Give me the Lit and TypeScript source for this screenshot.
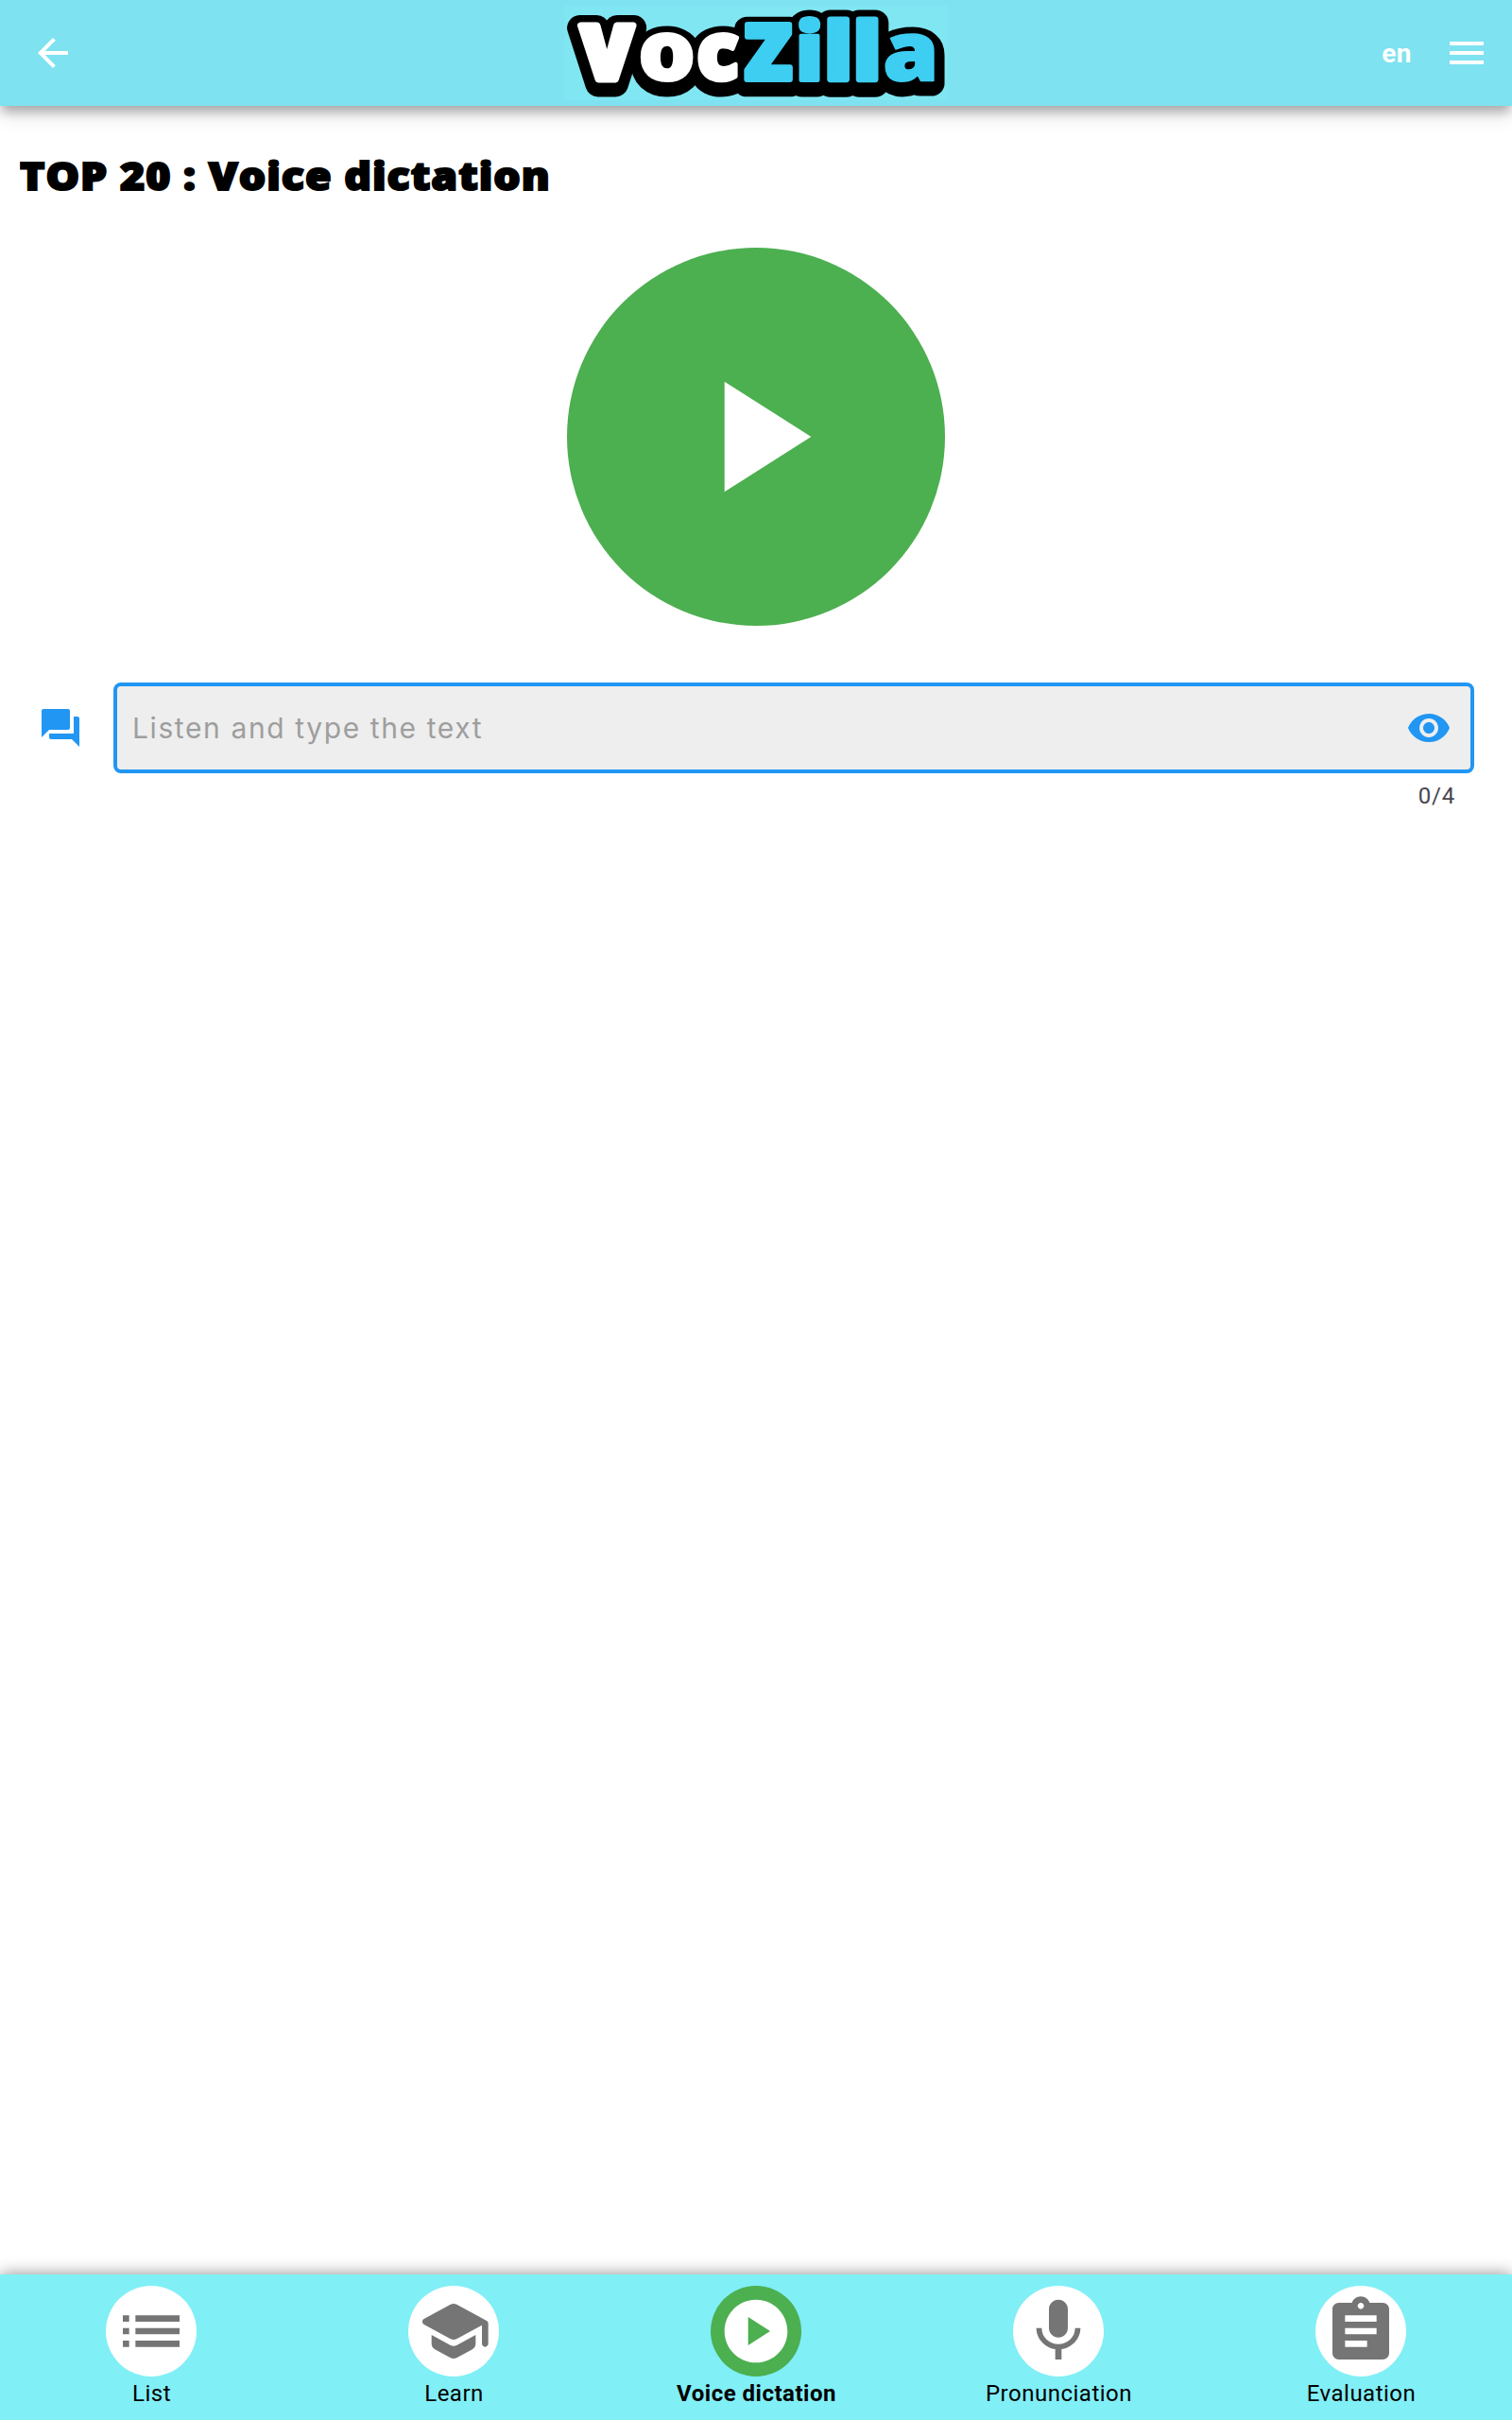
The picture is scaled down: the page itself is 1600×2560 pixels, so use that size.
import { LitElement, html, css, svg } from "lit";
import { customElement, property } from "lit/decorators.js";

const ICONS: Record<string, string> = {
  back: "M20 11H7.83l5.59-5.59L12 4l-8 8 8 8 1.41-1.41L7.83 13H20v-2z",
  menu: "M3 18h18v-2H3v2zm0-5h18v-2H3v2zm0-7v2h18V6H3z",
  play: "M8 5v14l11-7z",
  chat: "M21 6h-2v9H6v2c0 .55.45 1 1 1h11l4 4V7c0-.55-.45-1-1-1zm-4 6V3c0-.55-.45-1-1-1H3c-.55 0-1 .45-1 1v14l4-4h10c.55 0 1-.45 1-1z",
  eye: "M12 4.5C7 4.5 2.73 7.61 1 12c1.73 4.39 6 7.5 11 7.5s9.27-3.11 11-7.5c-1.73-4.39-6-7.5-11-7.5zM12 17c-2.76 0-5-2.24-5-5s2.24-5 5-5 5 2.24 5 5-2.24 5-5 5zm0-8c-1.66 0-3 1.34-3 3s1.34 3 3 3 3-1.34 3-3-1.34-3-3-3z",
  list: "M3 13h2v-2H3v2zm0 4h2v-2H3v2zm0-8h2V7H3v2zm4 4h14v-2H7v2zm0 4h14v-2H7v2zM7 7v2h14V7H7z",
  school: "M5 13.18v2.81c0 .73.4 1.41 1.04 1.76l5 2.73c.6.33 1.32.33 1.92 0l5-2.73c.64-.35 1.04-1.03 1.04-1.76v-2.81l-6.04 3.3c-.6.33-1.32.33-1.92 0L5 13.18zm6.04-9.66l-8.43 4.6c-.69.38-.69 1.38 0 1.76l8.43 4.6c.6.33 1.32.33 1.92 0L21 10.09V16c0 .55.45 1 1 1s1-.45 1-1V9.59c0-.37-.2-.7-.52-.88l-9.52-5.19c-.6-.32-1.32-.32-1.92 0z",
  playCircle: "M12 2C6.48 2 2 6.48 2 12s4.48 10 10 10 10-4.48 10-10S17.52 2 12 2zm-2.5 14.5v-9l7 4.5-7 4.5z",
  mic: "M12 14c1.66 0 2.99-1.34 2.99-3L15 5c0-1.66-1.34-3-3-3S9 3.34 9 5v6c0 1.66 1.34 3 3 3zm5.3-3c0 3-2.54 5.1-5.3 5.1S6.7 14 6.7 11H5c0 3.41 2.72 6.23 6 6.72V21h2v-3.28c3.28-.48 6-3.3 6-6.72h-1.7z",
  assignment: "M19 3h-4.18C14.4 1.84 13.3 1 12 1c-1.3 0-2.4.84-2.82 2H5c-1.1 0-2 .9-2 2v14c0 1.1.9 2 2 2h14c1.1 0 2-.9 2-2V5c0-1.1-.9-2-2-2zm-7 0c.55 0 1 .45 1 1s-.45 1-1 1-1-.45-1-1 .45-1 1-1zm2 14H7v-2h7v2zm3-4H7v-2h10v2zm0-4H7V7h10v2z",
};

@customElement("vz-icon")
class VzIcon extends LitElement {
  @property() name = "back";
  static styles = css`
    :host { display: block; width: 48px; height: 48px; flex: none; }
    .glyph { display: block; width: 100%; height: 100%; fill: currentColor; }
  `;
  render() {
    return html`<svg class="glyph" viewBox="0 0 24 24"><path d=${ICONS[this.name]}></path></svg>`;
  }
}

interface Letter { ch: string; x1: number; x2: number; y1: number; y2: number; bold: number; blue?: boolean }

// Painted box of every letter inside the 406x100 artwork, and the weight added by its outline.
const LETTERS: Letter[] = [
  { ch: "V", x1: 14, x2: 77, y1: 17, y2: 81, bold: 7 },
  { ch: "o", x1: 80.5, x2: 137, y1: 28, y2: 81.5, bold: 2 },
  { ch: "c", x1: 141, x2: 186, y1: 28, y2: 81.5, bold: 4 },
  { ch: "Z", x1: 190, x2: 242, y1: 17.5, y2: 81, bold: 6, blue: true },
  { ch: "i", x1: 247, x2: 272, y1: 11, y2: 81, bold: 4, blue: true },
  { ch: "l", x1: 278, x2: 302.5, y1: 11, y2: 81, bold: 6, blue: true },
  { ch: "l", x1: 308.5, x2: 333, y1: 11, y2: 81, bold: 6, blue: true },
  { ch: "a", x1: 338.5, x2: 392, y1: 28, y2: 81.5, bold: 2, blue: true },
];

const FONT_SIZE = 80;
const measure = document.createElement("canvas").getContext("2d")!;

// Transform that makes the stroked ink of a glyph fill the given box.
function fit(l: Letter, stroke: number, grow: number, dy: number): string {
  measure.font = `800 ${FONT_SIZE}px "Open Sans"`;
  const m = measure.measureText(l.ch);
  const left = -m.actualBoundingBoxLeft - stroke / 2;
  const right = m.actualBoundingBoxRight + stroke / 2;
  const top = -m.actualBoundingBoxAscent - stroke / 2;
  const bottom = m.actualBoundingBoxDescent + stroke / 2;
  const sx = (l.x2 - l.x1 + 2 * grow) / (right - left);
  const sy = (l.y2 - l.y1 + 2 * grow) / (bottom - top);
  return `translate(${l.x1 - grow - left * sx} ${l.y1 - grow + dy - top * sy}) scale(${sx} ${sy})`;
}

@customElement("vz-logo")
class VzLogo extends LitElement {
  static styles = css`
    :host { display: block; width: 406px; height: 100px; background: #80e6f2; }
    .art { display: block; width: 406px; height: 100px; overflow: visible; }
    .letter { font-family: "Open Sans", sans-serif; font-weight: 800; font-size: 80px; stroke-linejoin: round; }
    .back { fill: #000; stroke: #000; }
    .white { fill: #fff; stroke: #fff; }
    .blue { fill: #3dcef2; stroke: #3dcef2; }
  `;
  render() {
    return html`<svg class="art" viewBox="0 0 406 100">
      ${LETTERS.map(
        (l) => svg`<text class="letter back" stroke-width="26" transform=${fit(l, 26, 10.8, 4.5)}>${l.ch}</text>`
      )}
      <rect x="90" y="38" width="295" height="42"></rect>
      ${LETTERS.map(
        (l) => svg`<text class="letter ${l.blue ? "blue" : "white"}" stroke-width=${l.bold}
          transform=${fit(l, l.bold, 0, 0)}>${l.ch}</text>`
      )}
    </svg>`;
  }
}

const TABS = [
  { icon: "list", label: "List" },
  { icon: "school", label: "Learn" },
  { icon: "playCircle", label: "Voice dictation", active: true },
  { icon: "mic", label: "Pronunciation" },
  { icon: "assignment", label: "Evaluation" },
];

@customElement("app-root")
class AppRoot extends LitElement {
  static styles = css`
    :host {
      display: flex; flex-direction: column; width: 100%; height: 2560px;
      background: #fff; color: #000; overflow: hidden;
      font-family: Roboto, sans-serif;
    }
    .bar {
      display: grid; grid-template-columns: 1fr auto 1fr; align-items: center;
      height: 112px; flex: none; box-sizing: border-box; padding: 0 24px 0 32px;
      background: #7ee2f0; color: #fff;
      box-shadow: 0 8px 10px -2px rgba(0,0,0,.24), 0 8px 20px 0 rgba(0,0,0,.16);
    }
    .brand { margin-left: -8px; }
    .actions { display: flex; justify-content: flex-end; align-items: center; gap: 34px; }
    .lang { font-size: 28px; font-weight: 700; line-height: 32px; letter-spacing: .5px; padding-top: 2px; }
    .content { flex: 1; display: flex; flex-direction: column; }
    .title {
      margin: 41px 0 0 21px; height: 64px; line-height: 64px; white-space: nowrap; align-self: flex-start;
      font-family: "Open Sans", sans-serif; font-weight: 800; font-size: 41px;
      -webkit-text-stroke: 2px #000; letter-spacing: .95px;
      transform: scaleX(1.09); transform-origin: left center;
    }
    .play {
      width: 400px; height: 400px; margin: 45px auto 0; border: 0; padding: 0; border-radius: 50%;
      background: #4caf50; color: #fff; display: flex; align-items: center; justify-content: center;
    }
    .play-icon { width: 200px; height: 200px; }
    .entry { display: flex; align-items: center; gap: 32px; margin: 60px 40px 0; color: #2196f3; }
    .field {
      flex: 1; height: 96px; box-sizing: border-box; border: 4px solid #2196f3; border-radius: 8px;
      background: #eee; display: flex; align-items: center; justify-content: space-between;
      padding: 0 20px 0 16px;
    }
    .hint { font-family: Inter, sans-serif; font-weight: 400; font-size: 30px; letter-spacing: 1.6px; color: #9e9e9e; }
    .counter { margin: 10px 60px 0; text-align: right; font-size: 24px; line-height: 28px; letter-spacing: .8px; color: #49454f; }
    .tabs {
      display: grid; grid-template-columns: repeat(5, 1fr); height: 154px; flex: none;
      background: #80eff6; box-shadow: 0 0 16px rgba(0,0,0,.45);
    }
    .tab { display: flex; flex-direction: column; align-items: center; padding-top: 12px; }
    .disc {
      width: 96px; height: 96px; border-radius: 50%; background: #fff; color: #757575;
      display: flex; align-items: center; justify-content: center;
    }
    .tab-icon { width: 80px; height: 80px; }
    .label { margin-top: 4px; padding-left: 1px; font-size: 24px; line-height: 28px; letter-spacing: .5px; }
    .active .disc { background: #4caf50; color: #fff; }
    .active .label { font-weight: 700; }
  `;
  render() {
    return html`
      <header class="bar">
        <vz-icon name="back"></vz-icon>
        <vz-logo class="brand"></vz-logo>
        <div class="actions"><span class="lang">en</span><vz-icon name="menu"></vz-icon></div>
      </header>
      <main class="content">
        <h1 class="title">TOP 20 : Voice dictation</h1>
        <button class="play" aria-label="Play"><vz-icon class="play-icon" name="play"></vz-icon></button>
        <div class="entry">
          <vz-icon name="chat"></vz-icon>
          <div class="field">
            <span class="hint">Listen and type the text</span>
            <vz-icon name="eye"></vz-icon>
          </div>
        </div>
        <div class="counter">0/4</div>
      </main>
      <nav class="tabs">
        ${TABS.map(
          (t) => html`<div class="tab ${t.active ? "active" : ""}">
            <div class="disc"><vz-icon class="tab-icon" name=${t.icon}></vz-icon></div>
            <span class="label">${t.label}</span>
          </div>`
        )}
      </nav>
    `;
  }
}
